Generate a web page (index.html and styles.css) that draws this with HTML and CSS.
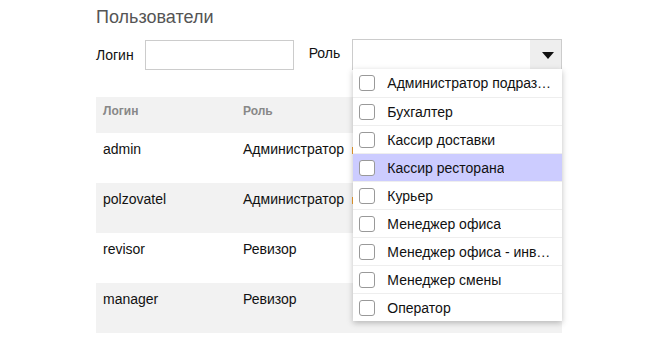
FILE: index.html
```html
<!DOCTYPE html>
<html lang="ru">
<head>
    <meta charset="UTF-8">
    <meta name="viewport" content="width=device-width, initial-scale=1.0">
    <title>Пользователи</title>
    <link rel="stylesheet" href="styles.css">
</head>
<body>
    <div class="page">
        <h2 class="title">Пользователи</h2>
        <div class="filters">
            <label class="filter-label" for="login">Логин</label>
            <input type="text" id="login" class="login-input">
            <label class="filter-label role-label">Роль</label>
            <div class="select">
                <div class="select-box">
                    <span class="select-arrow"></span>
                </div>
                <ul class="dropdown">
                    <li class="option"><span class="check"></span><span class="option-text">Администратор подразделения</span></li>
                    <li class="option"><span class="check"></span><span class="option-text">Бухгалтер</span></li>
                    <li class="option"><span class="check"></span><span class="option-text">Кассир доставки</span></li>
                    <li class="option active"><span class="check"></span><span class="option-text">Кассир ресторана</span></li>
                    <li class="option"><span class="check"></span><span class="option-text">Курьер</span></li>
                    <li class="option"><span class="check"></span><span class="option-text">Менеджер офиса</span></li>
                    <li class="option"><span class="check"></span><span class="option-text">Менеджер офиса - инвентаризация</span></li>
                    <li class="option"><span class="check"></span><span class="option-text">Менеджер смены</span></li>
                    <li class="option"><span class="check"></span><span class="option-text">Оператор</span></li>
                </ul>
            </div>
        </div>
        <table class="users">
            <tr>
                <th class="col-login">Логин</th>
                <th>Роль</th>
            </tr>
            <tr>
                <td>admin</td>
                <td>Администратор <span class="mark"></span></td>
            </tr>
            <tr>
                <td>polzovatel</td>
                <td>Администратор <span class="mark"></span></td>
            </tr>
            <tr>
                <td>revisor</td>
                <td>Ревизор</td>
            </tr>
            <tr>
                <td>manager</td>
                <td>Ревизор</td>
            </tr>
        </table>
    </div>
</body>
</html>
```

FILE: styles.css
```css
body {
    margin: 0;
    font-family: "Liberation Sans", Arial, sans-serif;
    font-size: 14px;
    color: #111;
    background: #fff;
}

.page {
    padding: 6px 0 0 96px;
    width: 466px;
}

.title {
    margin: 0;
    font-size: 18px;
    line-height: 22px;
    font-weight: normal;
    color: #555;
}

.filters {
    display: flex;
    align-items: center;
    margin-top: 11px;
}

.filter-label {
    margin-right: 11px;
    line-height: 16px;
}

.role-label {
    margin-left: 15px;
    margin-right: 12px;
    margin-top: -4px;
}

.login-input {
    width: 149px;
    height: 30px;
    margin: 1px 0 0 0;
    padding: 0 6px;
    box-sizing: border-box;
    border: 1px solid #ccc;
    border-radius: 0;
    font: inherit;
}

.select {
    position: relative;
    width: 211px;
}

.select-box {
    height: 31px;
    box-sizing: border-box;
    border: 1px solid #ccc;
    display: flex;
    justify-content: flex-end;
}

.select-arrow {
    width: 31px;
    background: #eee;
    position: relative;
}

.select-arrow::after {
    content: "";
    position: absolute;
    left: 12px;
    top: 12px;
    border-left: 6px solid transparent;
    border-right: 6px solid transparent;
    border-top: 7px solid #111;
}

.dropdown {
    position: absolute;
    top: 30px;
    left: 1px;
    right: 0;
    margin: 0;
    padding: 0;
    list-style: none;
    background: #fff;
    box-shadow: 0 2px 6px rgba(0, 0, 0, 0.25);
    z-index: 2;
}

.option {
    display: flex;
    align-items: center;
    height: 28px;
    box-sizing: border-box;
    padding: 0 7px 0 6px;
    border-top: 1px solid #eee;
}

.option:first-child {
    border-top: none;
}

.option.active {
    background: #ccccff;
}

.check {
    flex: none;
    width: 16px;
    height: 16px;
    box-sizing: border-box;
    border: 1px solid #999;
    border-radius: 3px;
    background: #fff;
    margin-right: 12px;
}

.option-text {
    white-space: nowrap;
    overflow: hidden;
    text-overflow: ellipsis;
}

.users {
    width: 466px;
    margin-top: 27px;
    border-collapse: collapse;
    table-layout: fixed;
}

.users th,
.users td {
    text-align: left;
    vertical-align: top;
    padding: 8px 7px 0;
    line-height: 16px;
    box-sizing: border-box;
    white-space: nowrap;
}

.users th {
    height: 36px;
    padding-top: 6px;
    font-size: 12px;
    font-weight: bold;
    color: #888;
    background: #f2f2f2;
}

.users td {
    height: 50px;
}

.users tr:nth-child(odd) td {
    background: #f2f2f2;
}

.col-login {
    width: 140px;
}

.mark {
    display: inline-block;
    width: 12px;
    height: 7px;
    margin-left: 4px;
    background: #f0a030;
}
```
